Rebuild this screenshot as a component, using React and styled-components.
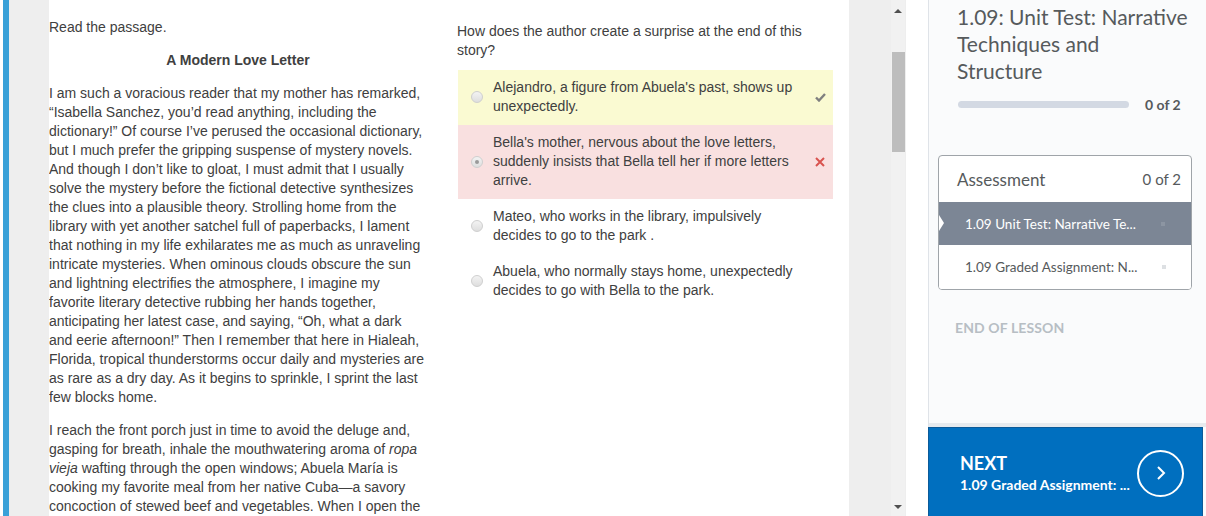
import React from "react";
import styled, { createGlobalStyle } from "styled-components";

const GlobalStyle = createGlobalStyle`
    *, *::before, *::after {
        box-sizing: border-box;
    }
    html, body {
        margin: 0;
        padding: 0;
        height: 100%;
        overflow: hidden;
        background: #ffffff;
    }
    #root {
        height: 100%;
    }
`;

const Page = styled.div`
    display: flex;
    height: 516px;
    width: 1206px;
    overflow: hidden;
    background: #fff;
`;

const SideStripe = styled.div`
    flex: 0 0 46px;
    margin-left: 3px;
    border-left: 6px solid #3aa1d8;
    background: #eeeeee;
`;

const Content = styled.div`
    flex: 0 0 800px;
    display: flex;
    gap: 30px;
    overflow: hidden;
    font-family: "Liberation Sans", Arial, sans-serif;
    font-size: 14px;
    line-height: 19px;
    color: #404040;
`;

const Passage = styled.div`
    flex: 0 0 378px;
    padding-top: 17.5px;

    p {
        margin: 0 0 14px;
    }
`;

const PassageTitle = styled.p`
    text-align: center;
    font-weight: bold;
`;

const Question = styled.div`
    flex: 0 0 376px;
    padding-top: 22px;
`;

const Prompt = styled.div`
    margin-bottom: 10px;
`;

const OptionList = styled.div`
    margin-left: 1px;
    width: 375px;
`;

const Option = styled.div`
    display: flex;
    align-items: center;
    padding: 8px 0 9px;
    background: ${(p) =>
        p.$state === "correct"
            ? "#fafad2"
            : p.$state === "wrong"
            ? "#f9e0e0"
            : "#fff"};
`;

const Radio = styled.span`
    flex: 0 0 12px;
    height: 12px;
    margin: 0 10px 0 13px;
    border-radius: 50%;
    border: 1px solid #cfcfcf;
    background: linear-gradient(#f3f3f3, #dedede);
    display: flex;
    align-items: center;
    justify-content: center;

    &::after {
        content: "";
        width: 4px;
        height: 4px;
        border-radius: 50%;
        background: ${(p) => (p.$checked ? "#9a9a9a" : "transparent")};
    }
`;

const OptionText = styled.div`
    flex: 0 0 312px;
`;

const Mark = styled.span`
    flex: 1;
    display: flex;
    justify-content: center;
    padding-left: 2px;
`;

const ScrollTrack = styled.div`
    flex: 0 0 57px;
    background: #eeeeee;
    display: flex;
    justify-content: flex-end;
    padding-right: 1px;
`;

const Rail = styled.div`
    width: 14px;
    display: flex;
    flex-direction: column;
    align-items: center;
    background: #f1f1f1;
`;

const Arrow = styled.span`
    width: 0;
    height: 0;
    border-left: 4px solid transparent;
    border-right: 4px solid transparent;
    ${(p) =>
        p.$down
            ? "border-top: 4px solid #505050; margin-top: auto; margin-bottom: 7px;"
            : "border-bottom: 4px solid #505050; margin-top: 9px;"}
`;

const Thumb = styled.div`
    width: 13px;
    height: 100px;
    margin-top: 39px;
    background: #bdbdbd;
`;

const Gutter = styled.div`
    flex: 0 0 22px;
`;

const Panel = styled.aside`
    flex: 0 0 278px;
    display: flex;
    flex-direction: column;
    background: #fafbfc;
    border-left: 1px solid #dfe3e8;
    font-family: Lato, "Noto Sans", sans-serif;
    color: #494c4e;
`;

const PanelBody = styled.div`
    flex: 1;
    padding: 3px 0 0 9px;
`;

const UnitTitle = styled.h1`
    margin: 0 0 0 19px;
    width: 232px;
    font-size: 21px;
    font-weight: 400;
    line-height: 27px;
    color: #565a5c;
`;

const ProgressRow = styled.div`
    display: flex;
    align-items: center;
    margin: 12px 0 0 20px;
    height: 16px;
`;

const ProgressBar = styled.div`
    flex: 0 0 171px;
    height: 7px;
    border-radius: 4px;
    background: #d3d9e3;
`;

const ProgressCount = styled.span`
    margin-left: 16px;
    font-size: 14px;
    font-weight: 700;
    color: #565a5c;
`;

const Card = styled.div`
    margin-top: 43px;
    width: 254px;
    border: 1px solid #9fa4a9;
    border-radius: 4px;
    background: #fff;
    overflow: hidden;
`;

const CardHeader = styled.div`
    display: flex;
    justify-content: space-between;
    align-items: center;
    height: 46px;
    padding: 0 10px 0 18px;
    font-size: 17px;
    color: #565a5c;

    span:last-child {
        font-size: 15px;
    }
`;

const Lesson = styled.div`
    position: relative;
    display: flex;
    align-items: center;
    height: ${(p) => (p.$active ? "43px" : "44px")};
    padding-left: 26px;
    font-size: 13.5px;
    background: ${(p) => (p.$active ? "#7c8695" : "#fff")};
    color: ${(p) => (p.$active ? "#fff" : "#565a5c")};

    &::before {
        content: "";
        display: ${(p) => (p.$active ? "block" : "none")};
        position: absolute;
        left: 0;
        top: 13px;
        border-top: 8px solid transparent;
        border-bottom: 8px solid transparent;
        border-left: 5px solid #fff;
    }
`;

const LessonName = styled.span`
    flex: 0 0 172px;
    white-space: nowrap;
`;

const Dot = styled.span`
    width: 4px;
    height: 4px;
    margin-left: 24px;
    background: ${(p) => (p.$active ? "#8c95a2" : "#dde0e3")};
`;

const EndLabel = styled.div`
    margin: 29px 0 0 17px;
    font-size: 14px;
    font-weight: 700;
    color: #b7bec4;
    letter-spacing: 0.1px;
`;

const Divider = styled.div`
    height: 4px;
    background: #e6eaee;
`;

const NextButton = styled.button`
    display: flex;
    align-items: center;
    height: 89px;
    margin: 0 3px 0 -1px;
    padding: 0 18px 0 31px;
    border: 1px solid #0b5a98;
    border-bottom: none;
    background: #006fbf;
    color: #fff;
    font-family: Lato, "Noto Sans", sans-serif;
    text-align: left;
    cursor: pointer;
`;

const NextText = styled.div`
    flex: 1;
    min-width: 0;

    strong {
        display: block;
        font-size: 18px;
        line-height: 22px;
    }

    span {
        display: block;
        margin-top: 2px;
        font-size: 14px;
        font-weight: 700;
        white-space: nowrap;
        overflow: hidden;
    }
`;

const NextCircle = styled.span`
    flex: 0 0 47px;
    height: 47px;
    border: 2px solid #fff;
    border-radius: 50%;
    display: flex;
    align-items: center;
    justify-content: center;
    margin-top: 2px;
`;

const options = [
    {
        text: "Alejandro, a figure from Abuela's past, shows up unexpectedly.",
        state: "correct",
    },
    {
        text: "Bella's mother, nervous about the love letters, suddenly insists that Bella tell her if more letters arrive.",
        state: "wrong",
        checked: true,
    },
    {
        text: "Mateo, who works in the library, impulsively decides to go to the park .",
    },
    {
        text: "Abuela, who normally stays home, unexpectedly decides to go with Bella to the park.",
    },
];

const Check = () => (
    <svg width="11" height="9" viewBox="0 0 11 9">
        <path d="M1 4.5 L4 7.5 L10 1" fill="none" stroke="#7f7f7f" strokeWidth="2.4" />
    </svg>
);

const Cross = () => (
    <svg width="10" height="10" viewBox="0 0 10 10">
        <path d="M1 1 L9 9 M9 1 L1 9" stroke="#d9534f" strokeWidth="2" />
    </svg>
);

export default function App() {
    return (
        <Page>
            <GlobalStyle />
            <SideStripe />
            <Content>
                <Passage>
                    <p>Read the passage.</p>
                    <PassageTitle>A Modern Love Letter</PassageTitle>
                    <p>
                        I am such a voracious reader that my mother has remarked, “Isabella
                        Sanchez, you’d read anything, including the dictionary!” Of course
                        I’ve perused the occasional dictionary, but I much prefer the gripping
                        suspense of mystery novels. And though I don’t like to gloat, I must
                        admit that I usually solve the mystery before the fictional detective
                        synthesizes the clues into a plausible theory. Strolling home from the
                        library with yet another satchel full of paperbacks, I lament that
                        nothing in my life exhilarates me as much as unraveling intricate
                        mysteries. When ominous clouds obscure the sun and lightning
                        electrifies the atmosphere, I imagine my favorite literary detective
                        rubbing her hands together, anticipating her latest case, and saying,
                        “Oh, what a dark and eerie afternoon!” Then I remember that here in
                        Hialeah, Florida, tropical thunderstorms occur daily and mysteries are
                        as rare as a dry day. As it begins to sprinkle, I sprint the last few
                        blocks home.
                    </p>
                    <p>
                        I reach the front porch just in time to avoid the deluge and, gasping
                        for breath, inhale the mouthwatering aroma of <em>ropa vieja</em>{" "}
                        wafting through the open windows; Abuela María is cooking my favorite
                        meal from her native Cuba—a savory concoction of stewed beef and
                        vegetables. When I open the door
                    </p>
                </Passage>
                <Question>
                    <Prompt>How does the author create a surprise at the end of this story?</Prompt>
                    <OptionList>
                        {options.map((o, i) => (
                            <Option key={i} $state={o.state}>
                                <Radio $checked={o.checked} />
                                <OptionText>{o.text}</OptionText>
                                <Mark>
                                    {o.state === "correct" && <Check />}
                                    {o.state === "wrong" && <Cross />}
                                </Mark>
                            </Option>
                        ))}
                    </OptionList>
                </Question>
            </Content>
            <ScrollTrack>
                <Rail>
                    <Arrow />
                    <Thumb />
                    <Arrow $down />
                </Rail>
            </ScrollTrack>
            <Gutter />
            <Panel>
                <PanelBody>
                    <UnitTitle>1.09: Unit Test: Narrative Techniques and Structure</UnitTitle>
                    <ProgressRow>
                        <ProgressBar />
                        <ProgressCount>0 of 2</ProgressCount>
                    </ProgressRow>
                    <Card>
                        <CardHeader>
                            <span>Assessment</span>
                            <span>0 of 2</span>
                        </CardHeader>
                        <Lesson $active>
                            <LessonName>1.09 Unit Test: Narrative Te...</LessonName>
                            <Dot $active />
                        </Lesson>
                        <Lesson>
                            <LessonName>1.09 Graded Assignment: N...</LessonName>
                            <Dot />
                        </Lesson>
                    </Card>
                    <EndLabel>END OF LESSON</EndLabel>
                </PanelBody>
                <Divider />
                <NextButton>
                    <NextText>
                        <strong>NEXT</strong>
                        <span>1.09 Graded Assignment: ...</span>
                    </NextText>
                    <NextCircle>
                        <svg width="10" height="16" viewBox="0 0 10 16">
                            <path d="M2 2 L8 8 L2 14" fill="none" stroke="#fff" strokeWidth="2" />
                        </svg>
                    </NextCircle>
                </NextButton>
            </Panel>
        </Page>
    );
}
